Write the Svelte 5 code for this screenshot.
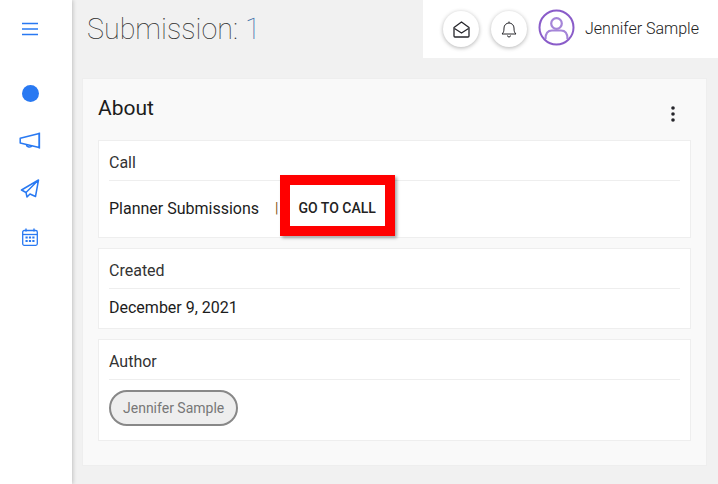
<script lang="ts">
  const sections = [
    { label: 'Created', value: 'December 9, 2021' }
  ];
</script>

<div class="layout">
  <nav class="sidebar">
    <button class="nav-btn menu" aria-label="Menu">
      <svg width="16" height="14" viewBox="0 0 16 14"><path d="M0 1.500h16M0 7h16M0 12.500h16" stroke="#2979f2" stroke-width="1.600" fill="none"/></svg>
    </button>
    <div class="nav-list">
      <span class="nav-item"><span class="dot"></span></span>
      <span class="nav-item">
        <svg width="22" height="18" viewBox="0 0 22 18" fill="none" stroke="#2979f2" stroke-width="1.500" stroke-linejoin="round"><path d="M1.200 6.200 20.200 1.600v14L1.200 11z"/><path d="M20.400 0.600v16"/><path d="M7.500 12.500c0 2.800 4.500 3.300 5.500 1"/></svg>
      </span>
      <span class="nav-item">
        <svg width="20" height="20" viewBox="0 0 20 20" fill="none" stroke="#2979f2" stroke-width="1.500" stroke-linejoin="round"><path d="M18.500 1 1.500 11l4.500 2.500L18.500 1 15.500 17.500 10 15 7 18l-1-4.500"/></svg>
      </span>
      <span class="nav-item">
        <svg width="16" height="18" viewBox="0 0 16 18" fill="none"><rect x=".7" y="2.500" width="14.600" height="14.800" rx="1.500" stroke="#2979f2" stroke-width="1.300"/><path d="M.7 6.500h14.600" stroke="#2979f2" stroke-width="1.300"/><path d="M4 .5v3M12 .5v3" stroke="#2979f2" stroke-width="1.400"/><path d="M3.500 8.500h2.200v2H3.500zM6.900 8.500h2.200v2H6.900zM10.300 8.500h2.200v2h-2.200zM3.500 12h2.200v2H3.500zM6.900 12h2.200v2H6.900zM10.300 12h2.200v2h-2.200z" fill="#2979f2"/></svg>
      </span>
    </div>
  </nav>

  <div class="content">
    <header class="topbar">
      <h1>Submission: <span class="num">1</span></h1>
      <div class="user-bar">
        <button class="round" aria-label="Messages">
          <svg width="17" height="17" viewBox="0 0 17 17" fill="none" stroke="#26262b" stroke-width="1.300" stroke-linejoin="round"><path d="M1 6.500 8.500 1 16 6.500V15a1 1 0 0 1-1 1H2a1 1 0 0 1-1-1z"/><path d="M1.500 7.500 8.500 12l7-4.500"/></svg>
        </button>
        <button class="round" aria-label="Notifications">
          <svg width="16" height="17" viewBox="0 0 16 17" fill="none" stroke="#26262b" stroke-width="1" stroke-linejoin="round"><path d="M1 13c1.500-1.500 2-2.500 2-6a5 5 0 0 1 10 0c0 3.500.5 4.500 2 6z"/><path d="M6.500 14.500a1.500 1.500 0 0 0 3 0"/><path d="M8 .5V2"/></svg>
        </button>
        <svg class="avatar" width="37" height="37" viewBox="0 0 37 37" fill="none" stroke="#8a5cc9"><circle cx="18.500" cy="18.500" r="17" stroke-width="2"/><circle cx="18.500" cy="14.500" r="5.300" stroke-width="2.200" stroke="#a585d8"/><path d="M7.500 30c0-6 3-8.500 6.500-8.500h9c3.500 0 6.500 2.500 6.500 8.500" stroke-width="2.200" stroke="#a585d8"/></svg>
        <span class="user-name">Jennifer Sample</span>
      </div>
    </header>

    <main class="card">
      <div class="card-head">
        <h2>About</h2>
        <button class="more" aria-label="More">
          <svg width="4" height="16" viewBox="0 0 4 16" fill="#26262b"><circle cx="2" cy="2" r="1.800"/><circle cx="2" cy="8" r="1.800"/><circle cx="2" cy="14" r="1.800"/></svg>
        </button>
      </div>

      <section class="box call">
        <div class="label">Call</div>
        <div class="value row">
          <span>Planner Submissions</span>
          <span class="sep">|</span>
          <span class="go">GO TO CALL<span class="highlight"></span></span>
        </div>
      </section>

      {#each sections as s}
        <section class="box">
          <div class="label">{s.label}</div>
          <div class="value">{s.value}</div>
        </section>
      {/each}

      <section class="box author">
        <div class="label">Author</div>
        <div class="chip-row"><span class="chip">Jennifer Sample</span></div>
      </section>
    </main>
  </div>
</div>

<style>
  :global(body) {
    margin: 0;
    background: #f1f1f1;
    font-family: Roboto, "Liberation Sans", sans-serif;
    overflow: hidden;
  }
  .layout {
    display: flex;
    width: 718px;
    height: 484px;
    overflow: hidden;
  }
  .sidebar {
    width: 72px;
    flex-shrink: 0;
    box-sizing: border-box;
    padding-right: 12px;
    background: #fff;
    box-shadow: 1px 0 4px rgba(0, 0, 0, 0.2);
    display: flex;
    flex-direction: column;
    align-items: center;
    z-index: 1;
  }
  .nav-btn {
    background: none;
    border: 0;
    padding: 0;
    display: flex;
  }
  .menu { margin-top: 22px; }
  .nav-list {
    margin-top: 45px;
    display: flex;
    flex-direction: column;
    gap: 24px;
  }
  .nav-item {
    width: 24px;
    height: 24px;
    display: flex;
    align-items: center;
    justify-content: center;
  }
  .dot {
    width: 17px;
    height: 17px;
    border-radius: 50%;
    background: #2979f2;
  }
  .content {
    flex: 1;
    min-width: 0;
  }
  .topbar {
    height: 58px;
    display: flex;
    justify-content: space-between;
  }
  h1 {
    margin: 11px 0 0 15px;
    font-size: 28.700px;
    line-height: 36px;
    font-weight: 100;
    color: #333;
  }
  .num { color: #3f6ea8; }
  .user-bar {
    width: 295px;
    background: #fff;
    display: flex;
    align-items: center;
    padding-left: 20px;
    box-sizing: border-box;
  }
  .round {
    width: 36px;
    height: 36px;
    border-radius: 50%;
    border: 0;
    padding: 0;
    background: #fff;
    box-shadow: 0 1px 4px rgba(0, 0, 0, 0.3);
    display: flex;
    align-items: center;
    justify-content: center;
    margin-right: 12px;
  }
  .avatar {
    margin-top: -3px;
    margin-left: -1px;
  }
  .user-name {
    margin-left: 10px;
    font-size: 16px;
    font-weight: 300;
    color: #222;
    margin-top: -2px;
  }
  .card {
    margin: 20px 11px 0 10px;
    height: 388px;
    box-sizing: border-box;
    background: #f9f9f9;
    border: 1px solid #eee;
    padding: 0 15px;
  }
  .card-head {
    height: 61px;
    display: flex;
    justify-content: space-between;
  }
  h2 {
    margin: 17px 0 0;
    font-size: 21px;
    line-height: 24px;
    font-weight: 400;
    color: #1c1c1c;
  }
  .more {
    background: none;
    border: 0;
    padding: 0;
    margin: 27px 16px 0 0;
    height: 16px;
    display: flex;
  }
  .box {
    background: #fff;
    border: 1px solid #eee;
    padding: 0 10px;
    margin-bottom: 10px;
  }
  .label {
    height: 40px;
    line-height: 44px;
    box-sizing: border-box;
    border-bottom: 1px solid #eee;
    font-size: 16px;
    color: #333;
  }
  .value {
    height: 39px;
    line-height: 38px;
    font-size: 16px;
    color: #1c1c1c;
  }
  .row {
    display: flex;
    height: 56px;
    line-height: 55px;
  }
  .sep {
    margin-left: 16px;
    color: #8a5a20;
    font-size: 14px;
  }
  .go {
    position: relative;
    margin-left: 20px;
    font-size: 14px;
    font-weight: 500;
    color: #222;
    height: 56px;
  }
  /* red annotation drawn over the screenshot */
  .highlight {
    position: absolute;
    left: -19px;
    right: -19px;
    top: -6px;
    height: 41px;
    border: 10px solid #f00;
    box-shadow: 2px 2px 3px rgba(0, 0, 0, 0.35);
  }
  .chip-row {
    padding: 10px 0 14px;
    display: flex;
  }
  .chip {
    height: 32px;
    line-height: 32px;
    padding: 0 12px;
    border: 2px solid #888;
    border-radius: 18px;
    background: #eee;
    color: #777;
    font-size: 14px;
  }
</style>
